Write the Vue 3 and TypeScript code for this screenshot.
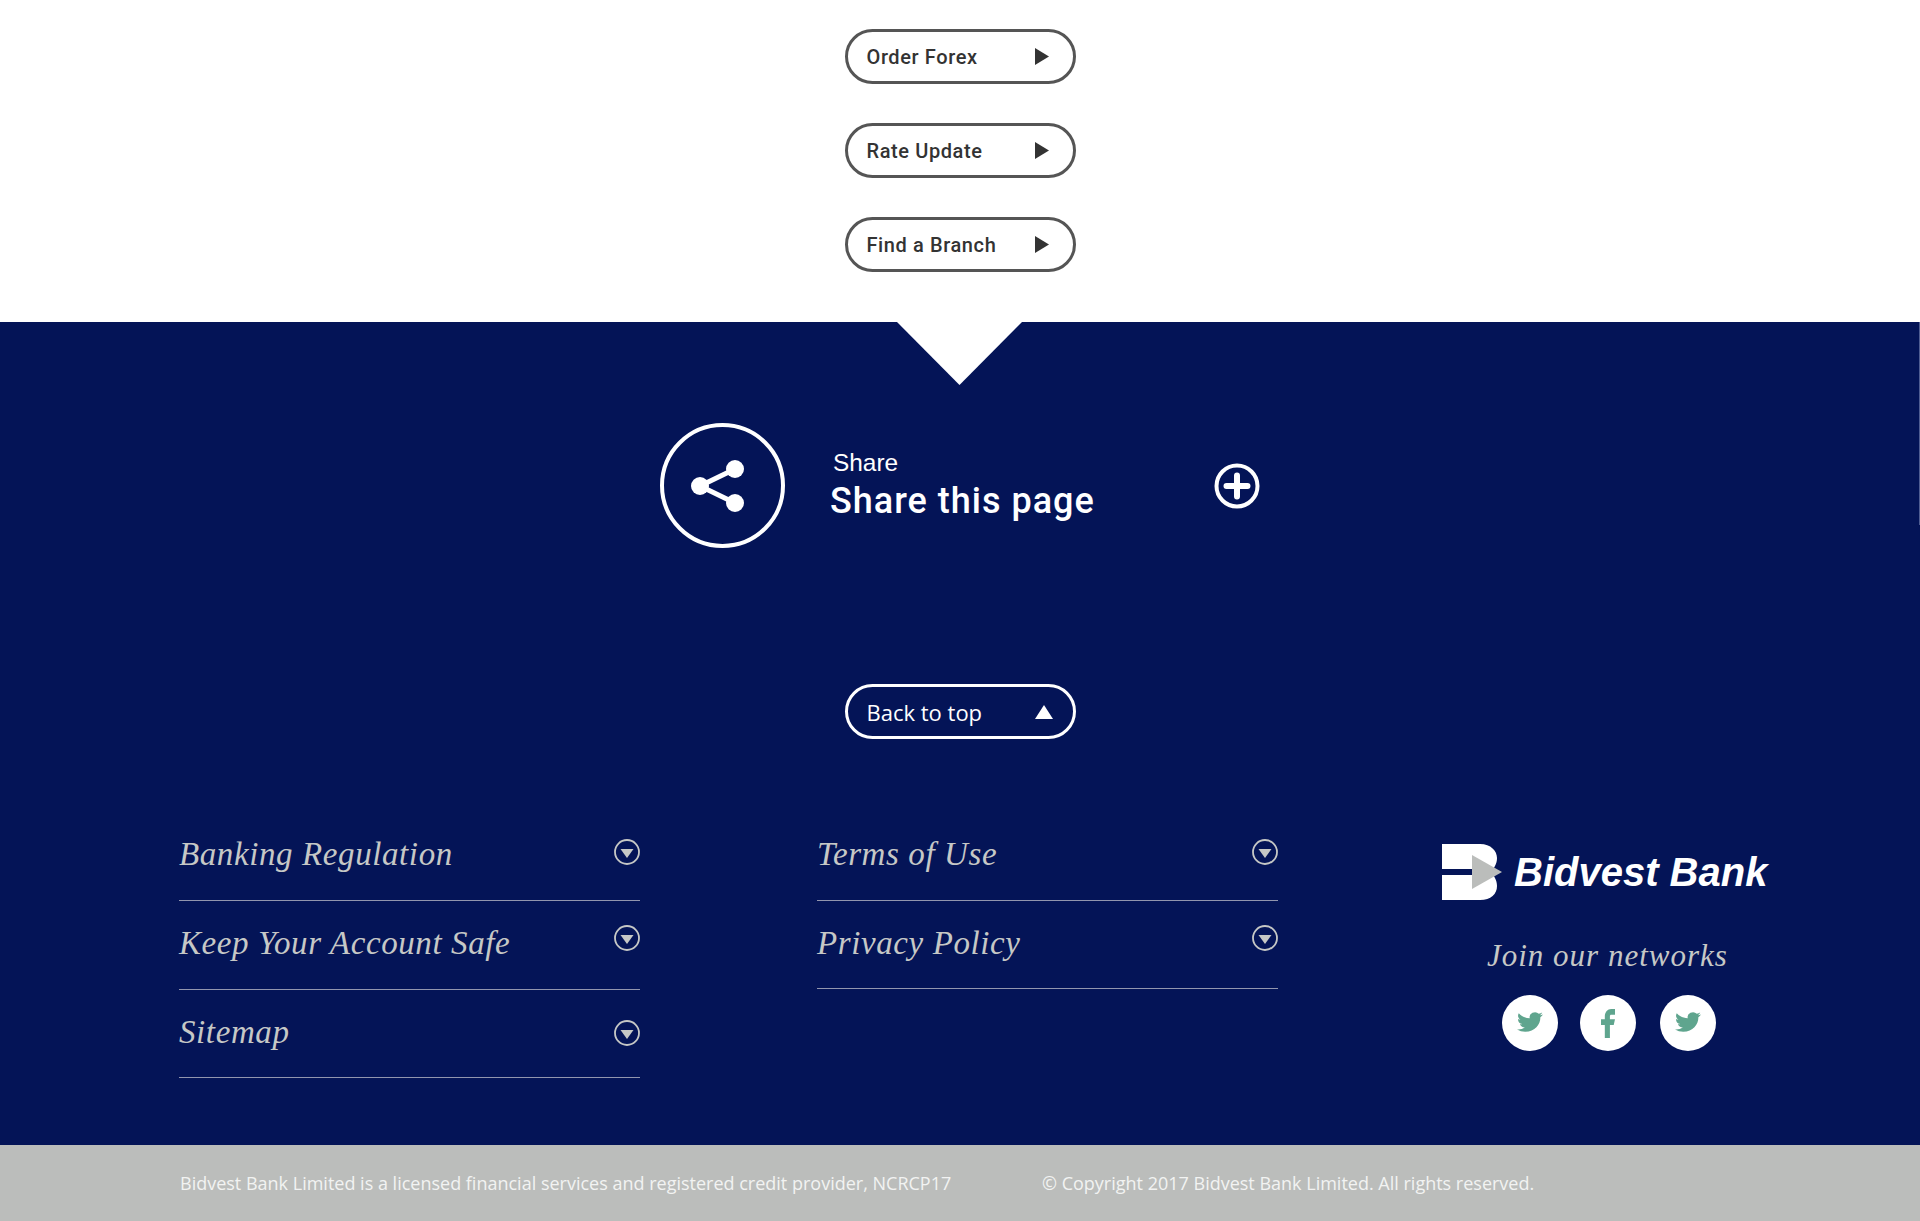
<script setup lang="ts">
const actions: string[] = ['Order Forex', 'Rate Update', 'Find a Branch']
const columnOne: string[] = ['Banking Regulation', 'Keep Your Account Safe', 'Sitemap']
const columnTwo: string[] = ['Terms of Use', 'Privacy Policy']
const bird = 'M23.953 4.57a10 10 0 01-2.825.775 4.958 4.958 0 002.163-2.723c-.951.555-2.005.959-3.127 1.184a4.92 4.92 0 00-8.384 4.482C7.69 8.095 4.067 6.13 1.64 3.162a4.822 4.822 0 00-.666 2.475c0 1.71.87 3.213 2.188 4.096a4.904 4.904 0 01-2.228-.616v.06a4.923 4.923 0 003.946 4.827 4.996 4.996 0 01-2.212.085 4.936 4.936 0 004.604 3.417 9.867 9.867 0 01-6.102 2.105c-.39 0-.779-.023-1.17-.067a13.995 13.995 0 007.557 2.209c9.053 0 13.998-7.496 13.998-13.985 0-.21 0-.42-.015-.63A9.935 9.935 0 0024 4.59z'
</script>

<template>
  <div class="page">
    <section class="actions">
      <a v-for="label in actions" :key="label" class="pill">
        <span>{{ label }}</span>
        <svg class="tri-right" width="14" height="17" viewBox="0 0 14 17"><path d="M0 0L14 8.5L0 17Z" fill="#333" /></svg>
      </a>
    </section>

    <section class="navy">
      <div class="notch"></div>
      <div class="edge"></div>

      <div class="share">
        <svg class="share-badge" width="125" height="125" viewBox="0 0 125 125">
          <circle cx="62.5" cy="62.5" r="60.5" fill="none" stroke="#fff" stroke-width="4" />
          <path d="M75 46L40 63L75 80" fill="none" stroke="#fff" stroke-width="5" />
          <circle cx="75" cy="46" r="9" fill="#fff" />
          <circle cx="40" cy="63" r="9" fill="#fff" />
          <circle cx="75" cy="80" r="9" fill="#fff" />
        </svg>
        <div class="share-text">
          <div class="share-kicker">Share</div>
          <div class="share-title">Share this page</div>
        </div>
        <svg class="share-plus" width="46" height="46" viewBox="0 0 46 46">
          <circle cx="23" cy="23" r="20.5" fill="none" stroke="#fff" stroke-width="4" />
          <path d="M12.5 23H33.5M23 12.5V33.5" fill="none" stroke="#fff" stroke-width="6" stroke-linecap="round" />
        </svg>
      </div>

      <a class="pill pill-light">
        <span>Back to top</span>
        <svg class="tri-up" width="18" height="14" viewBox="0 0 18 14"><path d="M9 0L18 14H0Z" fill="#fff" /></svg>
      </a>

      <div class="links">
        <ul class="link-col">
          <li v-for="item in columnOne" :key="item" class="link-row">
            <span>{{ item }}</span>
            <svg class="chev" width="26" height="26" viewBox="0 0 26 26">
              <circle cx="13" cy="13" r="12" fill="none" stroke="#c6c8c6" stroke-width="1.8" />
              <path d="M6.5 10H19.5L13 19Z" fill="#c6c8c6" />
            </svg>
          </li>
        </ul>
        <ul class="link-col">
          <li v-for="item in columnTwo" :key="item" class="link-row">
            <span>{{ item }}</span>
            <svg class="chev" width="26" height="26" viewBox="0 0 26 26">
              <circle cx="13" cy="13" r="12" fill="none" stroke="#c6c8c6" stroke-width="1.8" />
              <path d="M6.5 10H19.5L13 19Z" fill="#c6c8c6" />
            </svg>
          </li>
        </ul>
        <div class="brand">
          <div class="logo">
            <svg width="60" height="56" viewBox="0 0 60 56">
              <path d="M0 0H38C49 0 55 7 55 14C55 20 52 24 49 28C52 32 55 36 55 42C55 50 49 56 38 56H0Z" fill="#fff" />
              <rect x="0" y="25" width="30" height="6" fill="#041457" />
              <path d="M30 11L60 28L30 45Z" fill="#bbbdbb" />
            </svg>
            <span class="logo-word">Bidvest Bank</span>
          </div>
          <div class="join">Join our networks</div>
          <div class="socials">
            <span class="social">
              <svg width="26" height="22" viewBox="0 0 24 22" preserveAspectRatio="none"><path :d="bird" fill="#5fa58e" transform="translate(0 -2)" /></svg>
            </span>
            <span class="social">
              <svg width="14" height="29" viewBox="6 4 11 20" preserveAspectRatio="none"><path d="M14 8h3V4h-3c-2.8 0-5 2.2-5 5v2H6v4h3v9h4v-9h3l1-4h-4V9c0-.6.4-1 1-1z" fill="#5fa58e" /></svg>
            </span>
            <span class="social">
              <svg width="26" height="22" viewBox="0 0 24 22" preserveAspectRatio="none"><path :d="bird" fill="#5fa58e" transform="translate(0 -2)" /></svg>
            </span>
          </div>
        </div>
      </div>
    </section>

    <footer class="legal">
      <span class="legal-left">Bidvest Bank Limited is a licensed financial services and registered credit provider, NCRCP17</span>
      <span>© Copyright 2017 Bidvest Bank Limited. All rights reserved.</span>
    </footer>
  </div>
</template>

<style scoped>
.page {
  width: 1920px;
  height: 1221px;
  overflow: hidden;
  background: #fff;
}
.actions {
  height: 322px;
  box-sizing: border-box;
  padding-top: 29px;
  display: flex;
  flex-direction: column;
  align-items: center;
  gap: 39px;
}
.pill {
  width: 231px;
  height: 55px;
  box-sizing: border-box;
  border: 3px solid #555;
  border-radius: 28px;
  padding: 0 24px 0 19px;
  display: flex;
  align-items: center;
  justify-content: space-between;
  font-family: Roboto, sans-serif;
  font-weight: 500;
  font-size: 20px;
  letter-spacing: 0.6px;
  color: #333;
}
.navy {
  position: relative;
  height: 823px;
  background: #041457;
  display: flex;
  flex-direction: column;
  align-items: center;
}
.notch {
  position: absolute;
  left: 897px;
  top: 0;
  width: 125px;
  height: 63px;
  background: #fff;
  clip-path: polygon(0 0, 100% 0, 50% 100%);
}
.edge {
  position: absolute;
  right: 0;
  top: 0;
  width: 1px;
  height: 203px;
  background: #4f5d92;
}
.share {
  align-self: flex-start;
  margin: 101px 0 0 660px;
  display: flex;
  align-items: center;
}
.share-text {
  width: 384px;
  margin-left: 45px;
  color: #fff;
}
.share-kicker {
  margin: 0 0 0 3px;
  font-family: "Liberation Sans", Arial, sans-serif;
  font-size: 24.4px;
  line-height: 30px;
}
.share-title {
  font-family: Roboto, sans-serif;
  font-weight: 500;
  font-size: 36px;
  line-height: 46px;
  letter-spacing: 1px;
}
.pill-light {
  margin-top: 136px;
  border-color: #fff;
  padding-right: 20px;
  font-family: "Open Sans", sans-serif;
  font-weight: 400;
  font-size: 22px;
  letter-spacing: 0;
  color: #fff;
}
.links {
  align-self: stretch;
  margin-top: 73px;
  padding-left: 179px;
  display: flex;
  align-items: flex-start;
}
.link-col {
  list-style: none;
  margin: 0 177px 0 0;
  padding: 0;
  width: 461px;
}
.link-row {
  height: 89px;
  box-sizing: border-box;
  border-bottom: 1px solid #9296ae;
  display: flex;
  justify-content: space-between;
  align-items: flex-start;
  padding-top: 23px;
  font-family: "Liberation Serif", "Times New Roman", serif;
  font-style: italic;
  font-size: 33px;
  line-height: 38px;
  letter-spacing: 0.6px;
  color: #c6c8c6;
}
.link-row:last-child {
  height: 88px;
}
.chev {
  margin-top: 4px;
}
.link-row:nth-child(2) .chev {
  margin-top: 1px;
}
.link-row:nth-child(3) .chev {
  margin-top: 7px;
}
.brand {
  margin: 32px 0 0 -13px;
  width: 340px;
  display: flex;
  flex-direction: column;
  align-items: flex-start;
}
.logo {
  display: flex;
  align-items: center;
  gap: 12px;
}
.logo-word {
  font-family: "Liberation Sans", Arial, sans-serif;
  font-weight: 700;
  font-style: italic;
  font-size: 40px;
  line-height: 56px;
  color: #fff;
  white-space: nowrap;
}
.join {
  margin: 38px 0 0 45px;
  font-family: "Liberation Serif", "Times New Roman", serif;
  font-style: italic;
  font-size: 31px;
  line-height: 36px;
  letter-spacing: 1px;
  color: #c6c8c6;
  white-space: nowrap;
}
.socials {
  margin: 21px 0 0 60px;
  display: flex;
  gap: 22px;
}
.social {
  width: 56px;
  height: 56px;
  border-radius: 50%;
  background: #fff;
  display: flex;
  align-items: center;
  justify-content: center;
}
.social:last-child {
  margin-left: 2px;
}
.legal {
  height: 76px;
  box-sizing: border-box;
  background: #bbbdbb;
  padding: 0 0 0 180px;
  display: flex;
  align-items: center;
  font-family: "Open Sans", sans-serif;
  font-size: 18px;
  color: #f2f3f2;
  white-space: nowrap;
}
.legal-left {
  width: 862px;
}
</style>
